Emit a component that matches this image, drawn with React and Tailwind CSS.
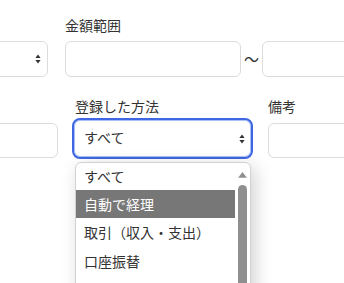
import React from "react"

const font = { fontFamily: '"Noto Sans CJK JP", "Noto Sans", sans-serif' }

function Arrows({ className }) {
  return (
    <svg className={className} width="6" height="10" viewBox="0 0 6 10">
      <path d="M3 0.5 L5.6 4 L0.4 4 Z" fill="#333" />
      <path d="M3 9.5 L5.6 6 L0.4 6 Z" fill="#333" />
    </svg>
  )
}

const options = ["すべて", "自動で経理", "取引（収入・支出）", "口座振替"]

export default function App() {
  return (
    <div className="relative h-[283px] w-[344px] overflow-hidden bg-white text-[14px] text-[#333]" style={font}>
      {/* 1行目 */}
      <div className="ml-[-102px] flex items-end pt-[15px]">
        <div className="flex h-[36px] w-[150px] shrink-0 items-center justify-end rounded-[6px] border border-[#dcdcdc] pr-[6px]">
          <Arrows />
        </div>
        <div className="ml-[17px] flex shrink-0 flex-col">
          <span className="leading-[20px]">金額範囲</span>
          <div className="mt-[6px] h-[36px] w-[176px] rounded-[6px] border border-[#dcdcdc]" />
        </div>
        <span className="flex h-[36px] w-[21px] shrink-0 items-center justify-center text-[15px]">〜</span>
        <div className="h-[36px] w-[120px] shrink-0 rounded-[6px] border border-[#dcdcdc]" />
      </div>

      {/* 2行目 */}
      <div className="ml-[-102px] mt-[19px] flex items-start">
        <div className="mt-[27px] h-[35px] w-[160px] shrink-0 rounded-[6px] border border-[#dcdcdc]" />
        <div className="ml-[14px] flex shrink-0 flex-col">
          <span className="pl-[3px] leading-[20px]">登録した方法</span>
          <div className="mt-[2px] flex h-[41px] w-[181px] items-center justify-between rounded-[8px] border-2 border-[#3f67e3] pb-[3px] pl-[10px] pr-[6px] shadow-[inset_0_0_0_1px_#a9c1f6]">
            <span>すべて</span>
            <Arrows className="mt-[3px]" />
          </div>
        </div>
        <div className="ml-[15px] flex shrink-0 flex-col">
          <span className="leading-[20px]">備考</span>
          <div className="mt-[7px] h-[35px] w-[120px] rounded-[6px] border border-[#dcdcdc]" />
        </div>
      </div>

      {/* ドロップダウン */}
      <div className="absolute left-[75px] top-[162px] flex h-[140px] w-[176px] rounded-t-[6px] border border-[#d2d2d2] bg-white shadow-[4px_4px_18px_rgba(0,0,0,0.18)]">
        <ul className="flex-1">
          {options.map((o, i) => (
            <li
              key={o}
              className={
                i === 1
                  ? "flex h-[28px] items-center bg-[#777777] pl-[8px] text-white"
                  : i === 0
                    ? "flex h-[27px] items-center pl-[8px]"
                    : "flex h-[29px] items-center pl-[8px]"
              }
            >
              {o}
            </li>
          ))}
        </ul>
        <div className="flex w-[15px] flex-col items-center pt-[9px]">
          <svg width="9" height="6" viewBox="0 0 9 6">
            <path d="M4.5 0 L9 6 L0 6 Z" fill="#8f8f8f" />
          </svg>
          <div className="mt-[7px] h-[120px] w-[9px] rounded-full bg-[#8f8f8f]" />
        </div>
      </div>
    </div>
  )
}
